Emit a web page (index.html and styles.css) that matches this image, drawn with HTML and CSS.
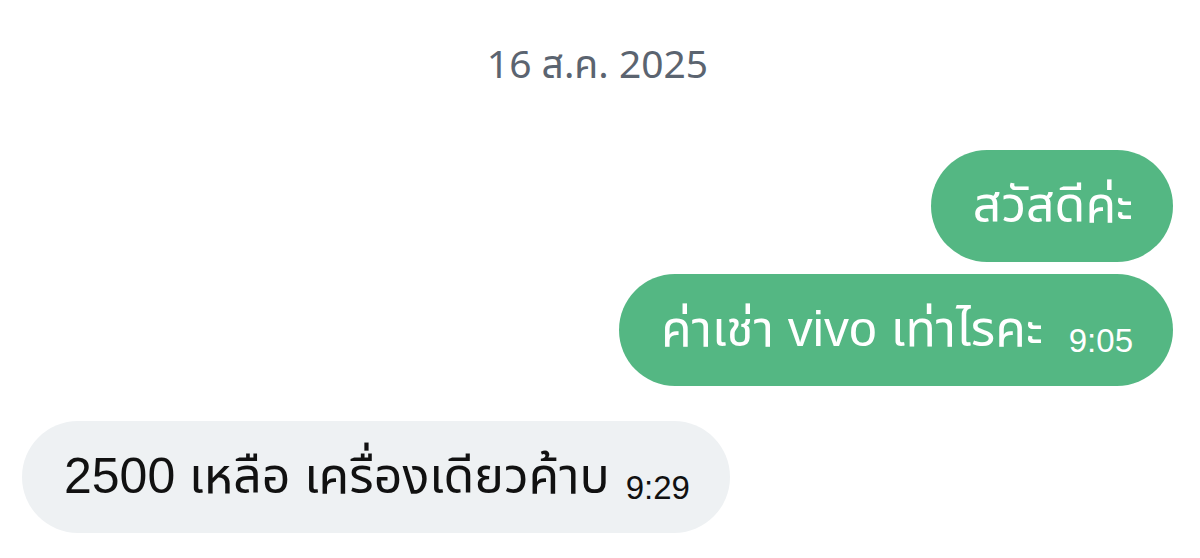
FILE: index.html
```html
<!DOCTYPE html>
<html lang="th">
<head>
    <meta charset="UTF-8">
    <meta name="viewport" content="width=device-width, initial-scale=1.0">
    <title>แชท</title>
    <link rel="stylesheet" href="styles.css">
</head>
<body>
    <div class="chat">
        <div class="date">16 ส.ค. 2025</div>

        <div class="row mine">
            <div class="bubble out">สวัสดีค่ะ</div>
        </div>
        <div class="row mine">
            <div class="bubble out">ค่าเช่า vivo เท่าไรคะ <span class="time">9:05</span></div>
        </div>

        <div class="row theirs">
            <div class="bubble in">2500 เหลือ เครื่องเดียวค้าบ <span class="time">9:29</span></div>
        </div>
    </div>
</body>
</html>
```

FILE: styles.css
```css
body {
    margin: 0;
    background: #ffffff;
    font-family: "Noto Sans", "Noto Sans Thai", sans-serif;
    color: #111;
}
.chat {
    display: flex;
    flex-direction: column;
    padding: 0 27px 0 22px;
}
.date {
    text-align: center;
    color: #5b6470;
    font-size: 39px;
    height: 150px;
    line-height: 126px;
}
.row {
    display: flex;
}
.mine {
    justify-content: flex-end;
    margin-bottom: 12px;
}
.theirs {
    margin-top: 23px;
    justify-content: flex-start;
}
.bubble {
    height: 112px;
    border-radius: 56px;
    padding: 2px 40px 0 42px;
    box-sizing: border-box;
    display: flex;
    align-items: center;
    font-family: "Liberation Sans", "Noto Sans Thai", "Noto Sans", sans-serif;
    font-size: 50px;
    white-space: pre;
}
.out {
    background: #54b783;
    color: #ffffff;
}
.out .time {
    margin-left: 12px;
}
.in {
    background: #eef1f3;
    color: #111;
}
.time {
    font-size: 33px;
    margin-top: 20px;
    margin-left: 2px;
}
```
